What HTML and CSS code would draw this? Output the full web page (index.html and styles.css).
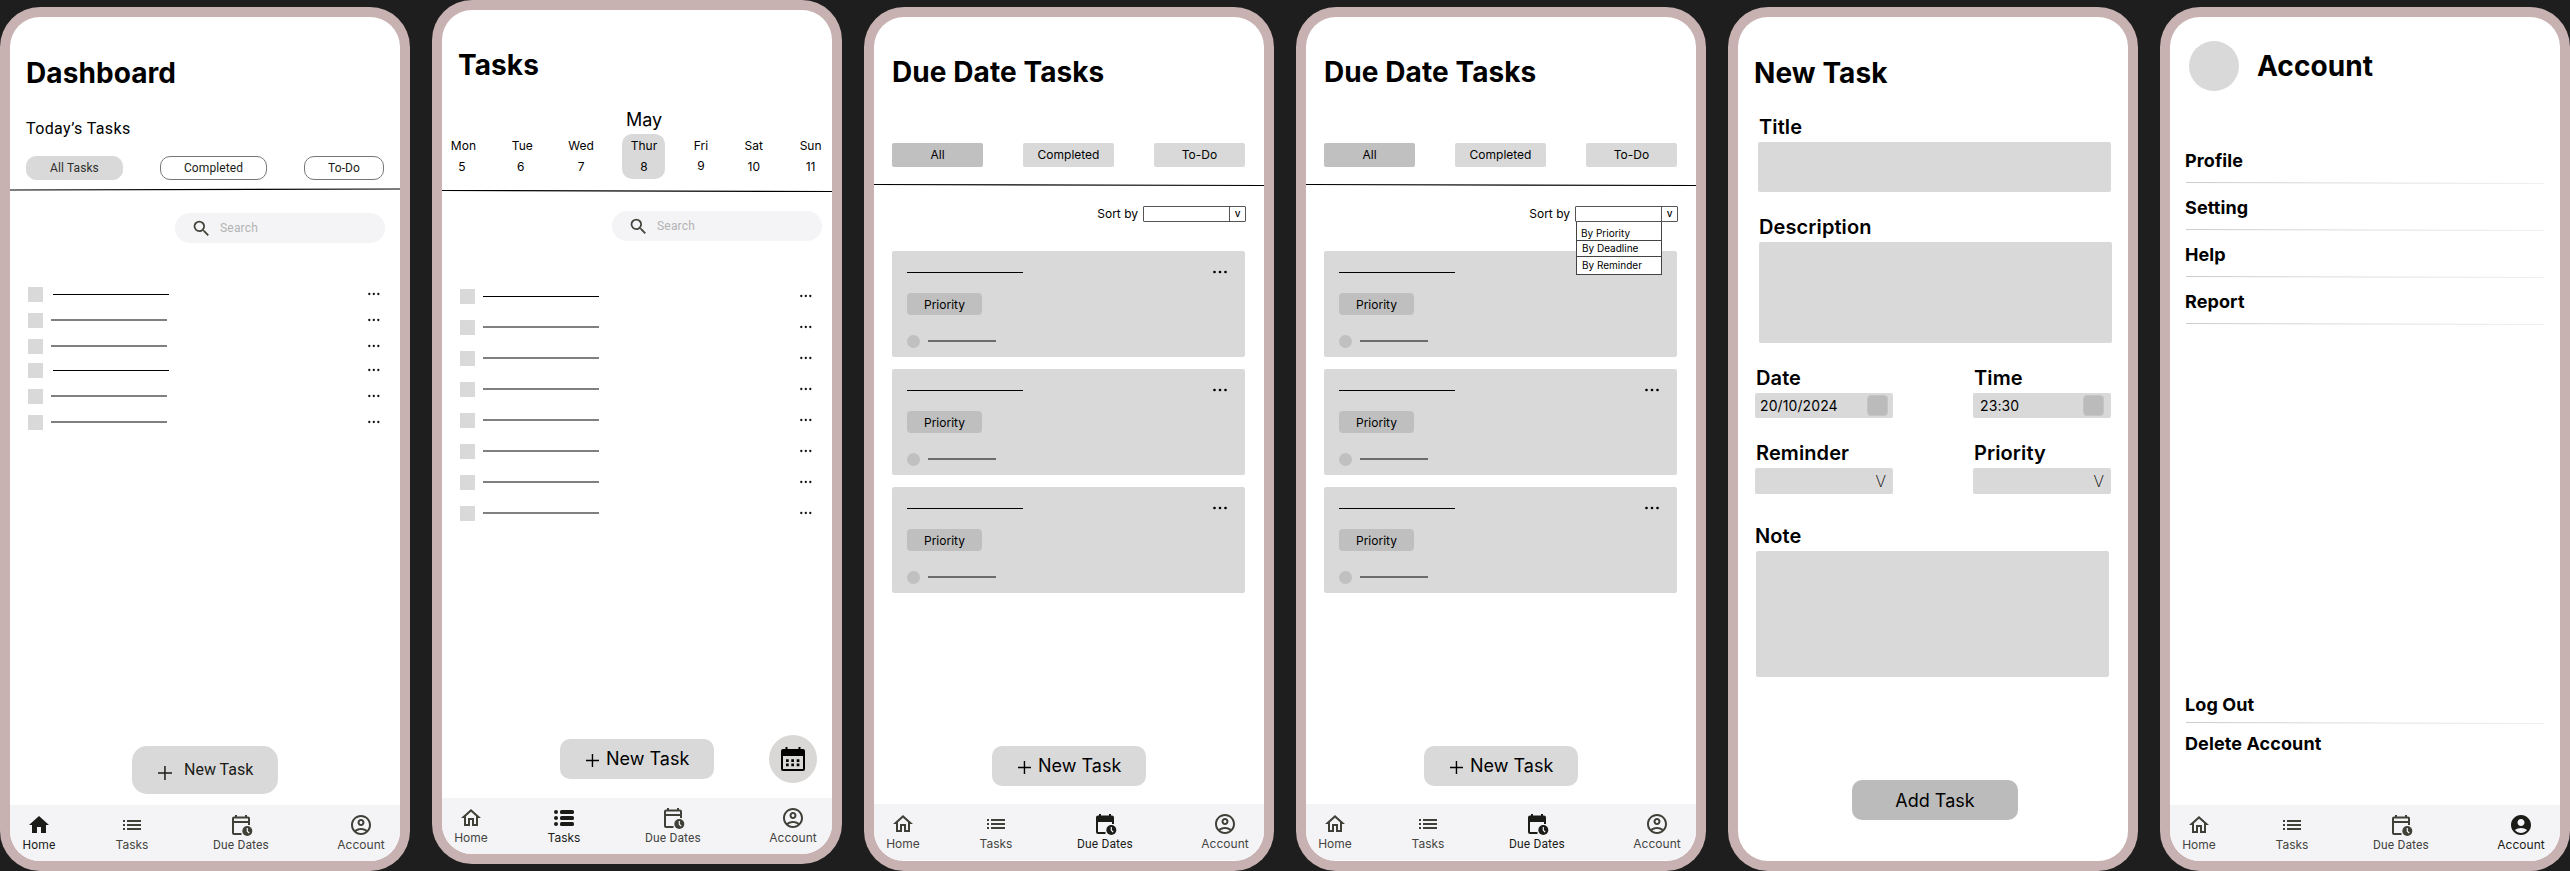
FILE: index.html
```html
<!DOCTYPE html>
<html lang="en">
<head>
<meta charset="utf-8">
<title>Task planner screens</title>
<link rel="stylesheet" href="styles.css">
</head>
<body>
<svg class="defs" aria-hidden="true">
  <defs>
    <linearGradient id="fade" gradientUnits="userSpaceOnUse" x1="0" y1="0" x2="358" y2="0">
      <stop offset="0" stop-color="#8c8c8c"/><stop offset="1" stop-color="#dedede"/>
    </linearGradient>
  </defs>
  <symbol id="home" viewBox="0 0 24 24"><path d="M12 5.69l5 4.5V18h-2v-6H9v6H7v-7.81l5-4.5M12 3L2 12h3v8h6v-6h2v6h6v-8h3L12 3z"/></symbol>
  <symbol id="home-on" viewBox="0 0 24 24"><path d="M10 20v-6h4v6h5v-8h3L12 3 2 12h3v8z"/></symbol>
  <symbol id="list" viewBox="0 0 24 24"><path d="M3 13h2v-2H3v2zm0 4h2v-2H3v2zm0-8h2V7H3v2zm4 4h14v-2H7v2zm0 4h14v-2H7v2zM7 7v2h14V7H7z"/></symbol>
  <symbol id="list-on" viewBox="0 0 24 24"><circle cx="4" cy="6" r="2"/><circle cx="4" cy="12" r="2"/><circle cx="4" cy="18" r="2"/><rect x="8" y="4" width="14" height="4" rx="1.6"/><rect x="8" y="10" width="14" height="4" rx="1.6"/><rect x="8" y="16" width="14" height="4" rx="1.6"/></symbol>
  <symbol id="due" viewBox="0 0 24 24"><path d="M12.5 22H5a2 2 0 0 1-2-2V5.500a2 2 0 0 1 2-2h1V2h2v1.500h8V2h2v1.500h1a2 2 0 0 1 2 2V12h-2V10H5v10h7.500zM5 8h14V5.500H5z" fill-rule="evenodd"/><circle cx="18.300" cy="18" r="5"/><path class="hand" d="M18.300 15v3.200l1.900 1.900"/></symbol>
  <symbol id="due-on" viewBox="0 0 24 24"><path d="M12.500 22H5a2 2 0 0 1-2-2V5.500a2 2 0 0 1 2-2h1V2h2v1.500h8V2h2v1.500h1a2 2 0 0 1 2 2V12h-2V10H5v10h7.500z"/><circle cx="18.300" cy="18" r="5"/><path class="hand" d="M18.300 15v3.200l1.900 1.900"/></symbol>
  <symbol id="user" viewBox="0 0 24 24"><path d="M12 2C6.480 2 2 6.480 2 12s4.480 10 10 10 10-4.480 10-10S17.520 2 12 2zM7.350 18.500C8.660 17.560 10.260 17 12 17s3.340.560 4.650 1.500c-1.310.940-2.910 1.500-4.650 1.500s-3.340-.560-4.650-1.500zm10.790-1.380C16.450 15.800 14.320 15 12 15s-4.450.800-6.140 2.120C4.700 15.730 4 13.950 4 12c0-4.420 3.580-8 8-8s8 3.580 8 8c0 1.950-.700 3.730-1.860 5.120zM12 6c-1.930 0-3.500 1.570-3.500 3.500S10.070 13 12 13s3.500-1.570 3.500-3.500S13.930 6 12 6zm0 5c-.830 0-1.500-.670-1.500-1.500S11.170 8 12 8s1.500.670 1.500 1.500S12.830 11 12 11z"/></symbol>
  <symbol id="user-on" viewBox="0 0 24 24"><path d="M12 2C6.480 2 2 6.480 2 12s4.480 10 10 10 10-4.480 10-10S17.520 2 12 2zm0 4c1.930 0 3.500 1.570 3.500 3.500S13.930 13 12 13s-3.500-1.570-3.500-3.500S10.070 6 12 6zm0 14c-2.030 0-4.430-.820-6.140-2.880C7.550 15.800 9.680 15 12 15s4.450.800 6.140 2.120C16.430 19.180 14.030 20 12 20z"/></symbol>
  <symbol id="search" viewBox="0 0 24 24"><path d="M15.500 14h-.790l-.280-.270A6.471 6.471 0 0 0 16 9.500 6.500 6.500 0 1 0 9.500 16c1.610 0 3.090-.590 4.230-1.570l.270.280v.790l5 4.990L20.490 19l-4.990-5zm-6 0C7.010 14 5 11.990 5 9.500S7.010 5 9.500 5 14 7.010 14 9.500 11.990 14 9.500 14z"/></symbol>
  <symbol id="calendar" viewBox="0 0 24 24"><path fill-rule="evenodd" d="M2 2h2.500V0h2v2h11V0h2v2H22a2 2 0 0 1 2 2v18a2 2 0 0 1-2 2H2a2 2 0 0 1-2-2V4a2 2 0 0 1 2-2zm0 7v13h20V9z"/><path d="M5 12.300h2.700V15H5zm5.300 0H13V15h-2.700zm5.400 0h2.700V15h-2.700zM5 16.500h2.700v2.700H5zm5.300 0H13v2.700h-2.700zm5.400 0h2.700v2.700h-2.700z"/></symbol>
  <symbol id="plus" viewBox="0 0 14 14"><path d="M6.200 0h1.500v6.200H14v1.500H7.700V14H6.200V7.700H0V6.200h6.200z"/></symbol>
  <symbol id="dots" viewBox="0 0 12 4"><circle cx="1.300" cy="2" r="1.150"/><circle cx="5.800" cy="2" r="1.150"/><circle cx="10.300" cy="2" r="1.150"/></symbol>
  <symbol id="dots-wide" viewBox="0 0 14 4"><circle cx="1.500" cy="2" r="1.350"/><circle cx="7" cy="2" r="1.350"/><circle cx="12.500" cy="2" r="1.350"/></symbol>
</svg>

<section class="phone">
  <div class="screen dashboard">
    <h1>Dashboard</h1>
    <p class="subtitle">Today’s Tasks</p>
    <div class="chips"><span class="chip on">All Tasks</span><span class="chip">Completed</span><span class="chip">To-Do</span></div>
    <svg class="rule" viewBox="0 0 390 4"><path d="M0 2L390 1"/></svg>
    <div class="search"><svg><use href="#search"/></svg><span>Search</span></div>
    <ul class="tasks">
      <li class="crisp"><i class="box"></i><i class="bar"></i><svg><use href="#dots"/></svg></li>
      <li><i class="box"></i><i class="bar"></i><svg><use href="#dots"/></svg></li>
      <li><i class="box"></i><i class="bar"></i><svg><use href="#dots"/></svg></li>
      <li class="crisp"><i class="box"></i><i class="bar"></i><svg><use href="#dots"/></svg></li>
      <li><i class="box"></i><i class="bar"></i><svg><use href="#dots"/></svg></li>
      <li><i class="box"></i><i class="bar"></i><svg><use href="#dots"/></svg></li>
    </ul>
    <div class="actions"><span class="button"><svg><use href="#plus"/></svg>New Task</span></div>
    <nav>
      <a class="on alt"><svg><use href="#home-on"/></svg>Home</a>
      <a><svg><use href="#list"/></svg>Tasks</a>
      <a class="alt"><svg><use href="#due"/></svg>Due Dates</a>
      <a><svg><use href="#user"/></svg>Account</a>
    </nav>
  </div>
</section>

<section class="phone raised">
  <div class="screen week">
    <h1>Tasks</h1>
    <p class="month">May</p>
    <div class="days">
      <div class="day shift"><span>Mon</span><b>5</b></div>
      <div class="day shift"><span>Tue</span><b>6</b></div>
      <div class="day"><span>Wed</span><b>7</b></div>
      <div class="day on"><span>Thur</span><b>8</b></div>
      <div class="day up"><span>Fri</span><b>9</b></div>
      <div class="day"><span>Sat</span><b>10</b></div>
      <div class="day"><span>Sun</span><b>11</b></div>
    </div>
    <svg class="rule" viewBox="0 0 390 4"><path d="M0 1.500L390 2.500"/></svg>
    <div class="search"><svg><use href="#search"/></svg><span>Search</span></div>
    <ul class="tasks">
      <li class="crisp"><i class="box"></i><i class="bar"></i><svg><use href="#dots"/></svg></li>
      <li><i class="box"></i><i class="bar"></i><svg><use href="#dots"/></svg></li>
      <li><i class="box"></i><i class="bar"></i><svg><use href="#dots"/></svg></li>
      <li><i class="box"></i><i class="bar"></i><svg><use href="#dots"/></svg></li>
      <li><i class="box"></i><i class="bar"></i><svg><use href="#dots"/></svg></li>
      <li><i class="box"></i><i class="bar"></i><svg><use href="#dots"/></svg></li>
      <li><i class="box"></i><i class="bar"></i><svg><use href="#dots"/></svg></li>
      <li><i class="box"></i><i class="bar"></i><svg><use href="#dots"/></svg></li>
    </ul>
    <div class="actions"><span class="button"><svg><use href="#plus"/></svg>New Task</span><span class="round"><svg><use href="#calendar"/></svg></span></div>
    <nav>
      <a><svg><use href="#home"/></svg>Home</a>
      <a class="on"><svg><use href="#list-on"/></svg>Tasks</a>
      <a class="alt"><svg><use href="#due"/></svg>Due Dates</a>
      <a><svg><use href="#user"/></svg>Account</a>
    </nav>
  </div>
</section>

<section class="phone">
  <div class="screen duedates">
    <h1>Due Date Tasks</h1>
    <div class="tabs"><span class="on">All</span><span>Completed</span><span>To-Do</span></div>
    <svg class="rule" viewBox="0 0 390 4"><path d="M0 1.500L390 2.500"/></svg>
    <div class="sort"><label>Sort by</label><div class="select"><b>v</b></div></div>
    <div class="cards">
      <article><i class="line"></i><svg><use href="#dots-wide"/></svg><span>Priority</span><div class="who"><i class="avatar"></i><i class="name"></i></div></article>
      <article><i class="line"></i><svg><use href="#dots-wide"/></svg><span>Priority</span><div class="who"><i class="avatar"></i><i class="name"></i></div></article>
      <article><i class="line"></i><svg><use href="#dots-wide"/></svg><span>Priority</span><div class="who"><i class="avatar"></i><i class="name"></i></div></article>
    </div>
    <div class="actions"><span class="button"><svg><use href="#plus"/></svg>New Task</span></div>
    <nav>
      <a><svg><use href="#home"/></svg>Home</a>
      <a><svg><use href="#list"/></svg>Tasks</a>
      <a class="on alt"><svg><use href="#due-on"/></svg>Due Dates</a>
      <a><svg><use href="#user"/></svg>Account</a>
    </nav>
  </div>
</section>

<section class="phone">
  <div class="screen duedates">
    <h1>Due Date Tasks</h1>
    <div class="tabs"><span class="on">All</span><span>Completed</span><span>To-Do</span></div>
    <svg class="rule" viewBox="0 0 390 4"><path d="M0 1.500L390 2.500"/></svg>
    <div class="sort"><label>Sort by</label><div class="select"><b>v</b>
      <ul class="menu"><li>By Priority</li><li>By Deadline</li><li>By Reminder</li></ul>
    </div></div>
    <div class="cards">
      <article><i class="line"></i><svg><use href="#dots-wide"/></svg><span>Priority</span><div class="who"><i class="avatar"></i><i class="name"></i></div></article>
      <article><i class="line"></i><svg><use href="#dots-wide"/></svg><span>Priority</span><div class="who"><i class="avatar"></i><i class="name"></i></div></article>
      <article><i class="line"></i><svg><use href="#dots-wide"/></svg><span>Priority</span><div class="who"><i class="avatar"></i><i class="name"></i></div></article>
    </div>
    <div class="actions"><span class="button"><svg><use href="#plus"/></svg>New Task</span></div>
    <nav>
      <a><svg><use href="#home"/></svg>Home</a>
      <a><svg><use href="#list"/></svg>Tasks</a>
      <a class="on alt"><svg><use href="#due-on"/></svg>Due Dates</a>
      <a><svg><use href="#user"/></svg>Account</a>
    </nav>
  </div>
</section>

<section class="phone">
  <div class="screen newtask">
    <h1>New Task</h1>
    <div class="group title"><label>Title</label><div class="field"></div></div>
    <div class="group description"><label>Description</label><div class="field"></div></div>
    <div class="pair">
      <div class="group"><label>Date</label><div class="field small"><span>20/10/2024</span><i class="picker"></i></div></div>
      <div class="group time"><label>Time</label><div class="field small"><span>23:30</span><i class="picker"></i></div></div>
    </div>
    <div class="pair">
      <div class="group"><label>Reminder</label><div class="field drop"><b>V</b></div></div>
      <div class="group"><label>Priority</label><div class="field drop"><b>V</b></div></div>
    </div>
    <div class="group note"><label>Note</label><div class="field"></div></div>
    <span class="submit">Add Task</span>
  </div>
</section>

<section class="phone">
  <div class="screen account">
    <header><i class="photo"></i><h1>Account</h1></header>
    <ul class="settings">
      <li>Profile<svg viewBox="0 0 358 4"><path d="M0 1.500L358 2.500"/></svg></li>
      <li>Setting<svg viewBox="0 0 358 4"><path d="M0 1.500L358 2.500"/></svg></li>
      <li>Help<svg viewBox="0 0 358 4"><path d="M0 1.500L358 2.500"/></svg></li>
      <li>Report<svg viewBox="0 0 358 4"><path d="M0 1.500L358 2.500"/></svg></li>
    </ul>
    <ul class="settings session">
      <li>Log Out<svg viewBox="0 0 358 4"><path d="M0 1.500L358 2.500"/></svg></li>
      <li>Delete Account</li>
    </ul>
    <nav>
      <a><svg><use href="#home"/></svg>Home</a>
      <a><svg><use href="#list"/></svg>Tasks</a>
      <a class="alt"><svg><use href="#due"/></svg>Due Dates</a>
      <a class="on"><svg><use href="#user-on"/></svg>Account</a>
    </nav>
  </div>
</section>
</body>
</html>
```
FILE: styles.css
```css
* { box-sizing: border-box; margin: 0; padding: 0; }
body {
  display: flex;
  align-items: flex-end;
  gap: 22px;
  width: 2570px;
  height: 871px;
  overflow: hidden;
  background: #1e1e1e;
  color: #000;
  font-family: Inter, sans-serif;
}
.defs { position: absolute; width: 0; height: 0; }
ul { list-style: none; }
i, svg { display: block; flex: none; }

/* Phone shell */
.phone {
  flex: none;
  width: 410px;
  height: 864px;
  padding: 10px;
  border-radius: 40px;
  background: #c7b1b1;
}
.raised { margin-bottom: 7px; }
.screen {
  display: flex;
  flex-direction: column;
  width: 390px;
  height: 844px;
  overflow: hidden;
  border-radius: 30px;
  background: #fff;
}
h1 { font-size: 28px; font-weight: 700; line-height: 34px; letter-spacing: .08px; white-space: nowrap; }
.rule { width: 390px; height: 4px; }
.rule path { stroke: #000; stroke-width: 1.2; }

/* Search */
.search {
  display: flex;
  align-items: center;
  align-self: flex-end;
  gap: 8px;
  width: 210px;
  height: 30px;
  margin-right: 15px;
  padding-left: 16px;
  border-radius: 15px;
  background: #f4f4f7;
  color: #b3b3b3;
  font: 12px/16px Roboto, sans-serif;
  letter-spacing: .2px;
}
.search svg { width: 21px; height: 21px; fill: #44443c; }

/* Placeholder task rows */
.tasks { padding: 0 20px 0 18px; }
.tasks li { display: flex; height: 15px; }
.tasks li + li { margin-top: 11px; }
.box { width: 15px; height: 15px; background: #d9d9d9; }
.bar { width: 116px; height: 2px; margin: 6px 0 0 8px; background: #808080; }
.crisp .bar { height: 1px; margin-top: 7px; background: #000; }
.tasks svg { width: 12px; height: 4px; margin: 5px 0 0 auto; fill: #111; }

/* Bottom actions */
.actions { display: flex; align-items: center; margin-top: auto; padding-left: 118px; }
.button {
  display: flex;
  align-items: center;
  gap: 7px;
  width: 154px;
  height: 40px;
  padding-left: 26px;
  border-radius: 10px;
  background: #d9d9d9;
  font-size: 18px;
  line-height: 22px;
  white-space: nowrap;
}
.button svg { width: 13px; height: 13px; margin-top: 3px; }
.round {
  display: flex;
  align-items: center;
  justify-content: center;
  width: 48px;
  height: 48px;
  margin-left: 55px;
  border-radius: 50%;
  background: #d9d8d7;
}
.round svg { width: 24px; height: 24px; }

/* Navigation */
nav { display: flex; height: 56px; background: #f4f4f7; }
nav a {
  display: flex;
  flex-direction: column;
  align-items: center;
  width: 60px;
  padding-top: 8px;
  color: #44453f;
  font-size: 12px;
  line-height: 16px;
  white-space: nowrap;
}
nav a:nth-child(1) { width: 58px; }
nav a:nth-child(2) { margin-left: 34px; }
nav a:nth-child(3) { margin-left: 49px; }
nav a:nth-child(4) { margin-left: 60px; }
nav svg { width: 24px; height: 24px; fill: #3f4038; }
nav .alt { font-family: Roboto, sans-serif; letter-spacing: .12px; }
nav .on { color: #1b1c17; }
nav .on svg { fill: #1b1c17; }
.hand { fill: none; stroke: #f4f4f7; stroke-width: 1.2; }

/* Dashboard */
.dashboard h1 { margin: 39px 0 0 16px; }
.subtitle { margin: 29px 0 0 16px; font: 16px/20px Roboto, sans-serif; letter-spacing: .4px; }
.chips { display: flex; gap: 37px; margin: 17px 0 0 16px; }
.chip {
  width: 80px;
  height: 24px;
  border: 1px solid #77777a;
  border-radius: 10px;
  color: #1c1c17;
  font: 12px/22px Roboto, sans-serif;
  letter-spacing: .1px;
  text-align: center;
}
.chip:nth-child(2) { width: 107px; }
.chip.on { width: 97px; border-color: #d9d9d9; background: #d9d9d9; color: #30302c; }
.dashboard .rule { margin-top: 8px; }
.dashboard .search { margin-top: 21px; }
.dashboard .tasks { margin-top: 44px; }
.dashboard .crisp .bar { margin-left: 10px; }
.dashboard .tasks li:nth-child(4) { margin-top: 9px; }
.dashboard .actions { margin-bottom: 11px; padding-left: 122px; }
.dashboard .button {
  gap: 12px;
  width: 146px;
  height: 48px;
  padding: 0 0 1px 26px;
  border-radius: 15px;
  color: #1b1c17;
  font: 16px/20px Roboto, sans-serif;
}
.dashboard .button svg { width: 14px; height: 14px; margin-top: 7px; fill: #1b1c17; }

/* Weekly tasks */
.week h1 { margin: 38px 0 0 16px; }
.month { margin: 27px 0 0 184px; font-size: 18px; line-height: 22px; }
.days { display: flex; margin-top: 3px; }
.day {
  display: flex;
  flex-direction: column;
  gap: 6px;
  width: 44px;
  height: 45px;
  padding: 4px 0 0 1px;
  border-radius: 10px;
  font-size: 12px;
  line-height: 15px;
  text-align: center;
}
.day b { font-weight: 400; }
.day.on { background: #d9d9d9; }
.day:nth-child(1) { margin-left: -1px; }
.day:nth-child(2), .day:nth-child(3) { margin-left: 15px; }
.day:nth-child(4) { margin-left: 19px; }
.day:nth-child(5), .day:nth-child(7) { margin-left: 13px; }
.day:nth-child(6) { margin-left: 9px; }
.day.shift b { padding-right: 3px; }
.day.up { gap: 5px; }
.week .rule { margin-top: 10px; }
.week .search { margin: 18px 10px 0 0; }
.week .tasks { margin-top: 48px; }
.week .tasks li + li { margin-top: 16px; }
.week .actions { margin-bottom: 15px; }

/* Due dates */
.duedates h1 { margin: 38px 0 0 18px; }
.tabs { display: flex; gap: 40px; margin: 54px 0 0 18px; }
.tabs span {
  width: 91px;
  height: 24px;
  border-radius: 2px;
  background: #d9d9d9;
  font-size: 12px;
  line-height: 24px;
  text-align: center;
}
.tabs .on { background: #c0c0c0; }
.duedates .rule { margin-top: 16px; }
.sort { display: flex; align-items: center; justify-content: flex-end; height: 16px; margin: 19px 18px 0 0; font-size: 12px; line-height: 16px; }
.sort label { margin-right: 5px; }
.select { position: relative; display: flex; justify-content: flex-end; width: 103px; height: 16px; border: 1px solid #555; border-radius: 1px; }
.select b { width: 16px; border-left: 1px solid #555; font-size: 10px; font-weight: 500; line-height: 13px; text-align: center; }
.menu {
  position: absolute;
  top: 15px;
  left: 0;
  width: 86px;
  height: 53px;
  border: 1px solid #444;
  border-top: 0;
  background: #fff;
  font-size: 10px;
  line-height: 15px;
}
.menu li { height: 16px; padding-left: 5px; border-bottom: 1px solid #444; }
.menu li:first-child { height: 19px; padding: 4px 0 0 4px; }
.menu li:last-child { border: 0; line-height: 17px; }
.cards { display: flex; flex-direction: column; gap: 12px; margin: 29px 0 0 18px; }
article {
  display: grid;
  grid-template: 22px 22px 1fr / 1fr auto;
  row-gap: 20px;
  width: 353px;
  height: 106px;
  padding: 0 18px 0 15px;
  border-radius: 2px;
  background: #d9d9d9;
}
article .line { align-self: end; width: 116px; height: 1px; background: #000; }
article svg { align-self: end; width: 14px; height: 4px; margin-bottom: -1px; }
article span { width: 75px; border-radius: 4px; background: #bfbfbf; font-size: 12px; line-height: 23px; height: 22px; text-align: center; }
.who { display: flex; grid-row: 3; gap: 8px; }
.avatar { width: 13px; height: 13px; border-radius: 50%; background: #c0c0c0; }
.name { width: 68px; height: 2px; margin-top: 5px; background: #6c6c6c; }
.duedates .actions { margin-bottom: 18px; }
.duedates nav { margin-bottom: 1px; }

/* New task form */
.newtask h1 { margin: 39px 0 0 16px; }
.group { display: flex; flex-direction: column; gap: 3px; }
.group label { padding-left: 1px; font-size: 20px; font-weight: 600; line-height: 24px; letter-spacing: .1px; }
.field { width: 353px; height: 50px; border-radius: 2px; background: #d9d9d9; }
.title { margin: 25px 0 0 20px; }
.description { margin: 23px 0 0 20px; }
.description .field { height: 101px; margin-left: 1px; }
.pair { display: flex; gap: 80px; margin: 23px 0 0 17px; }
.pair .field { display: flex; width: 138px; height: 25px; }
.small { justify-content: space-between; padding: 2px 5px 0 5px; font-size: 14px; line-height: 22px; letter-spacing: .1px; }
.time .small { padding: 2px 7px 0 7px; }
.picker { width: 21px; height: 21px; border: 1px solid #c4c4c4; border-radius: 4px; background: #bbb; }
.pair .drop { justify-content: flex-end; height: 26px; padding-right: 7px; }
.drop b { font-size: 16px; font-weight: 200; line-height: 27px; }
.note { margin: 30px 0 0 16px; }
.note .field { height: 126px; margin-left: 2px; }
.submit {
  width: 166px;
  height: 40px;
  margin: 103px 0 0 114px;
  border-radius: 10px;
  background: #bbb;
  font-size: 18px;
  line-height: 41px;
  text-align: center;
}

/* Account */
.account header { display: flex; align-items: center; gap: 18px; margin: 24px 0 0 19px; }
.photo { width: 50px; height: 50px; border-radius: 50%; background: #d9d9d9; }
.settings { margin: 59px 0 0 15px; font-size: 18px; font-weight: 700; line-height: 22px; letter-spacing: .1px; }
.settings svg { width: 358px; height: 4px; margin: 9px 0 0 1px; }
.settings li + li { margin-top: 12px; }
.settings path { stroke: url(#fade); stroke-width: .45; }
.session { margin-top: auto; margin-bottom: 50px; }
.session svg { margin-top: 5px; }
.session li + li { margin-top: 8px; }
```
